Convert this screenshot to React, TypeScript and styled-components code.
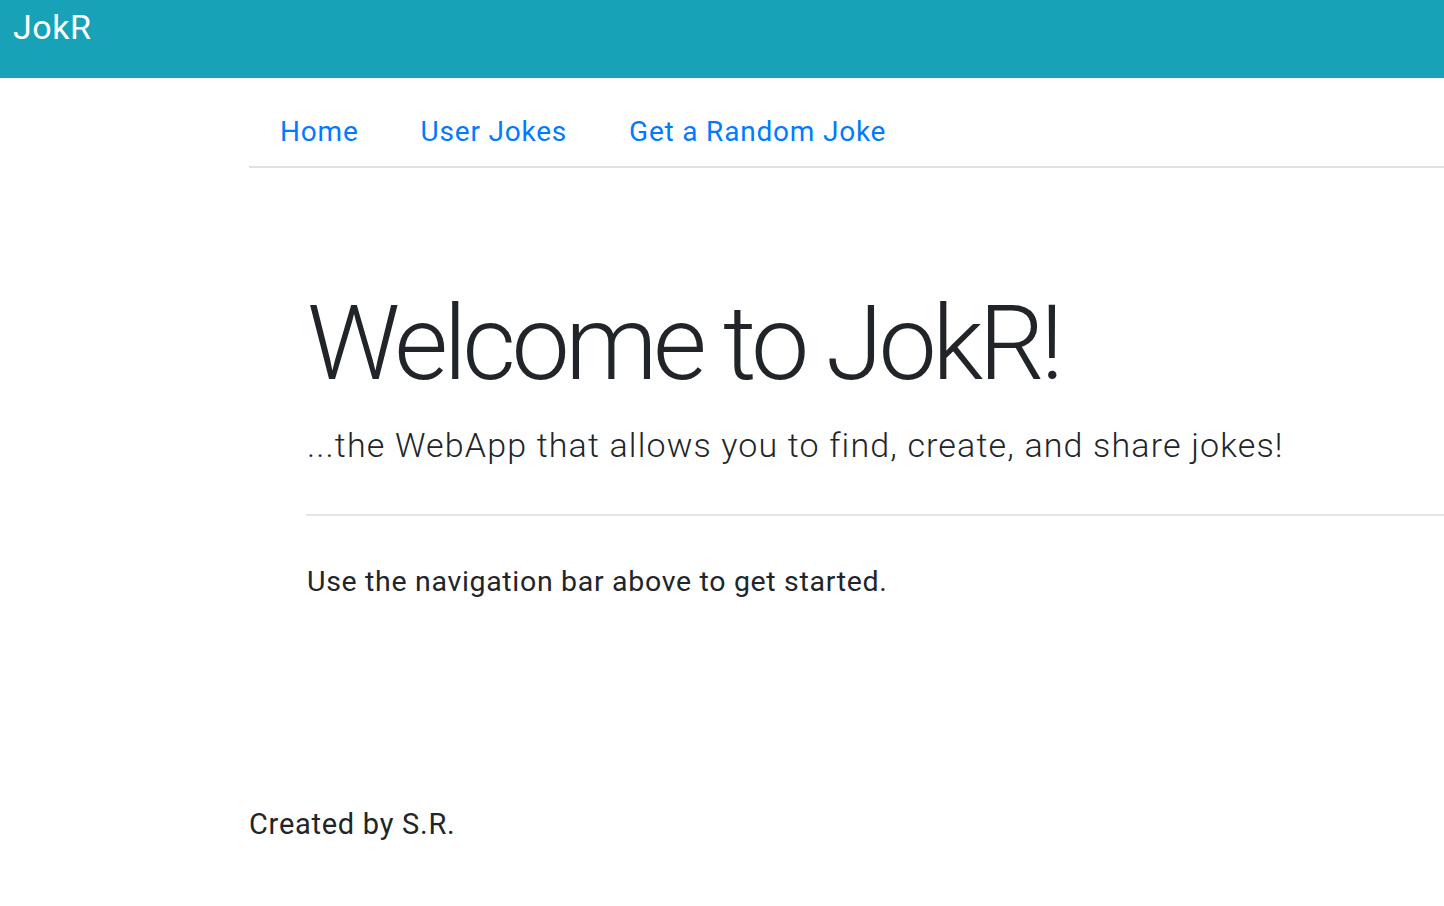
import React from "react";
import styled, { createGlobalStyle } from "styled-components";

const GlobalStyle = createGlobalStyle`
  html, body { margin: 0; padding: 0; background: #fff; }
  body { font-family: Roboto, "Noto Sans", sans-serif; color: #212529; }
  * { box-sizing: border-box; }
`;

const Header = styled.header`
  height: 78px;
  background: #17a2b8;
  padding: 10px 13px 0;
`;

const Brand = styled.div`
  color: #fff;
  font-size: 34px;
  line-height: 34px;
  font-weight: 400;
  letter-spacing: 0.5px;
`;

const Main = styled.main`
  margin-left: 249px;
`;

const NavTabs = styled.ul`
  list-style: none;
  margin: 0;
  padding: 34px 0 14px;
  display: flex;
  border-bottom: 2px solid #dee2e6;
`;

const NavLink = styled.a`
  display: block;
  padding: 0 31px;
  color: #007bff;
  font-size: 28px;
  line-height: 40px;
  letter-spacing: 0.8px;
  text-decoration: none;
`;

const Jumbo = styled.section`
  padding: 0 0 0 58px;
  margin-top: 116px;
`;

const Display = styled.h1`
  margin: 0;
  font-size: 104px;
  font-weight: 300;
  line-height: 120px;
  letter-spacing: -4.5px;
`;

const Lead = styled.p`
  margin: 19px 0 0;
  font-size: 34px;
  font-weight: 300;
  line-height: 44px;
  letter-spacing: 1.15px;
`;

const Rule = styled.hr`
  border: 0;
  border-top: 2px solid #e6e6e6;
  margin: 47px 0 0 -1px;
`;

const Body = styled.p`
  margin: 46px 0 0;
  font-size: 28.5px;
  line-height: 40px;
  letter-spacing: 0.68px;
`;

const Footer = styled.footer`
  margin-top: 202px;
  font-size: 29px;
  line-height: 40px;
  letter-spacing: 0.73px;
`;

export default function App() {
  return (
    <>
      <GlobalStyle />
      <Header>
        <Brand>JokR</Brand>
      </Header>
      <Main>
        <NavTabs>
          <li><NavLink href="#">Home</NavLink></li>
          <li><NavLink href="#">User Jokes</NavLink></li>
          <li><NavLink href="#">Get a Random Joke</NavLink></li>
        </NavTabs>
        <Jumbo>
          <Display>Welcome to JokR!</Display>
          <Lead>...the WebApp that allows you to find, create, and share jokes!</Lead>
          <Rule />
          <Body>Use the navigation bar above to get started.</Body>
        </Jumbo>
        <Footer>Created by S.R.</Footer>
      </Main>
    </>
  );
}
